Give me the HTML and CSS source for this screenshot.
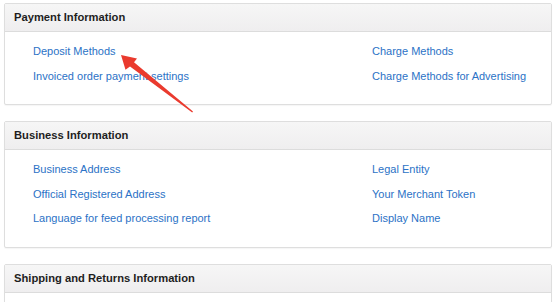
FILE: index.html
```html
<!DOCTYPE html>
<html>
<head>
<meta charset="utf-8">
<link rel="stylesheet" href="styles.css">
</head>
<body>
<div class="page">
  <section class="panel">
    <div class="panel-head">Payment Information</div>
    <div class="panel-body">
      <a class="link" href="#">Deposit Methods</a>
      <a class="link" href="#">Charge Methods</a>
      <a class="link" href="#">Invoiced order payment settings</a>
      <a class="link" href="#">Charge Methods for Advertising</a>
    </div>
  </section>
  <section class="panel">
    <div class="panel-head">Business Information</div>
    <div class="panel-body">
      <a class="link" href="#">Business Address</a>
      <a class="link" href="#">Legal Entity</a>
      <a class="link" href="#">Official Registered Address</a>
      <a class="link" href="#">Your Merchant Token</a>
      <a class="link" href="#">Language for feed processing report</a>
      <a class="link" href="#">Display Name</a>
    </div>
  </section>
  <section class="panel">
    <div class="panel-head">Shipping and Returns Information</div>
    <div class="panel-body"></div>
  </section>
</div>
<svg class="arrow" width="554" height="302" viewBox="0 0 554 302">
  <polygon points="121,55 137,58.5 134,62.2 193,111.4 192.2,112.4 130,66.5 125.5,69.8" fill="#ea3a2e"/>
</svg>
</body>
</html>
```

FILE: styles.css
```css
html, body {
  margin: 0;
  padding: 0;
  background: #ffffff;
}
body {
  font-family: "Liberation Sans", Arial, sans-serif;
  width: 554px;
  height: 302px;
  overflow: hidden;
  position: relative;
}
.page {
  padding: 3px 2px 0 4px;
  display: flex;
  flex-direction: column;
  gap: 16px;
}
.panel {
  border: 1px solid #dedede;
  border-radius: 2px;
  background: #fff;
  box-shadow: 0 1px 1px rgba(0,0,0,0.04);
}
.panel-head {
  height: 27px;
  line-height: 27px;
  padding-left: 9px;
  font-size: 11.2px;
  font-weight: bold;
  color: #1e1e1e;
  background: linear-gradient(#f6f6f6, #efeeef);
  border-bottom: 1px solid #dcdcdc;
}
.panel-body {
  display: grid;
  grid-template-columns: 339px 1fr;
  grid-auto-rows: 24.5px;
  padding: 7px 0 16px 28px;
}
.link {
  font-size: 11px;
  line-height: 24.5px;
  color: #2b72c6;
  text-decoration: none;
}
.arrow {
  position: absolute;
  left: 0;
  top: 0;
  pointer-events: none;
}
```
